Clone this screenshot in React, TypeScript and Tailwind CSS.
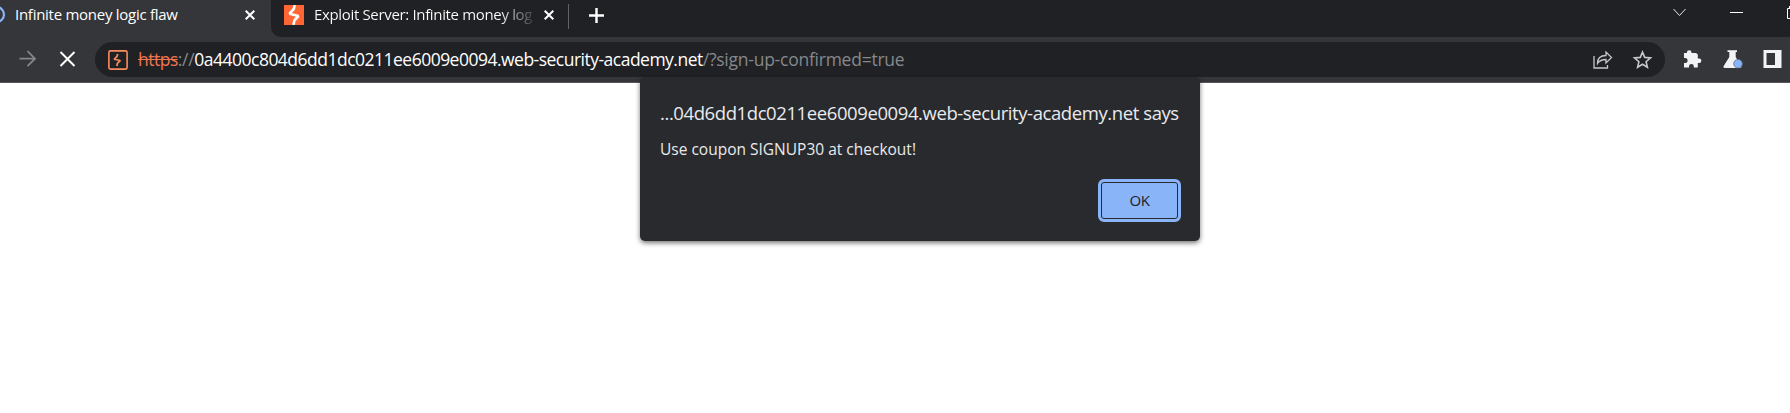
import React from "react";

const bolt = "M10.700 0L9.800 4L5.500 8.700L14.500 11L10.300 15.500L9.500 20";

function Close({ s = 10, w = 2 }: { s?: number; w?: number }) {
  return (
    <svg width={s} height={s} viewBox={`0 0 ${s} ${s}`} className="block shrink-0">
      <path d={`M0.7 0.7 L${s - 0.7} ${s - 0.7} M${s - 0.7} 0.7 L0.7 ${s - 0.7}`} stroke="#fff" strokeWidth={w} />
    </svg>
  );
}

function TabStrip() {
  return (
    <div className="flex h-[37px] bg-[#35363a]">
      <div className="flex h-[30px] w-[271px] items-center overflow-hidden">
        <svg width="15" height="20" viewBox="0 0 15 20" className="shrink-0">
          <circle cx="-3.5" cy="9.500" r="7.500" fill="none" stroke="#8ab4f8" strokeWidth="2.200" />
        </svg>
        <span className="mt-[-2px] w-[230px] whitespace-nowrap text-[15px] leading-[20px] tracking-[-0.27px] text-white">Infinite money logic flaw</span>
        <Close />
      </div>
      <div className="flex flex-1 rounded-bl-[10px] bg-[#202124]">
        <div className="flex h-[30px] flex-1 items-center pl-[13px]">
          <svg width="20" height="20" viewBox="0 0 20 20" className="shrink-0">
            <path d="M0 0H20V20H0Z" fill="#ff6633" />
            <path d={bolt} fill="none" stroke="#fff" strokeWidth="2.600" strokeLinejoin="bevel" />
          </svg>
          <span className="mt-[-2px] ml-[10px] w-[219px] whitespace-nowrap bg-linear-to-r from-white from-85% to-[#fff2] bg-clip-text text-[15px] leading-[20px] tracking-[-0.34px] text-transparent">Exploit Server: Infinite money log</span>
          <span className="ml-[11px]"><Close /></span>
          <span className="ml-[14px] mt-[2px] h-[25px] w-px bg-[#5f6368]" />
          <svg width="15" height="15" viewBox="0 0 15 15" className="ml-[20px]">
            <path d="M7.5 0V15M0 7.5H15" stroke="#fff" strokeWidth="2.4" />
          </svg>
        </div>
        <svg width="117" height="30" viewBox="0 0 117 30" className="shrink-0">
          <path d="M0.5 9L6.5 15.5L12.5 9" fill="none" stroke="#e8e8e8" strokeWidth="1" />
          <path d="M57 12.5H70" stroke="#fff" strokeWidth="1" />
          <path d="M117 8.5H114.5V18.5H117M116.5 8V6" fill="none" stroke="#fff" strokeWidth="1" />
        </svg>
      </div>
    </div>
  );
}

function Toolbar() {
  return (
    <div className="flex h-[46px] items-start border-b border-[#56575b] bg-[#35363a] pt-[5px]">
      <svg width="95" height="35" viewBox="0 0 95 35" className="shrink-0">
        <path d="M19.500 16.700H35M27.500 9.200L35 16.700L27.500 24.200" fill="none" stroke="#85868a" strokeWidth="1.800" />
        <path d="M60.500 10L74.500 24M74.500 10L60.500 24" stroke="#fff" strokeWidth="2" />
      </svg>
      <div className="flex h-[35px] w-[1570px] shrink-0 items-center rounded-full bg-[#202124] pl-[13px]">
        <svg width="20" height="20" viewBox="0 0 20 20" className="shrink-0">
          <rect x="0.900" y="0.900" width="18.200" height="18.200" rx="1.500" fill="none" stroke="#f98c5d" strokeWidth="1.600" />
          <path d={bolt} fill="none" stroke="#f98c5d" strokeWidth="2.600" strokeLinejoin="bevel" transform="translate(2.400 4) scale(.68 .6)" />
        </svg>
        <div className="mt-[-2px] ml-[10px] flex-1 whitespace-nowrap text-[17.5px] leading-[24px] tracking-[-0.24px] text-[#85888c]">
          <span className="tracking-[-0.500px] text-[#f0744e] line-through">https</span><span className="tracking-[-0.300px]">://</span><span className="tracking-[-0.510px] text-white">0a4400c804d6dd1dc0211ee6009e0094.web-security-academy.net</span>/?sign-up-confirmed=true
        </div>
        <svg width="72" height="35" viewBox="0 0 72 35" className="shrink-0" fill="none" stroke="#c5c7ca">
          <path d="M1 14V26H14.500V23" strokeWidth="1.300" />
          <path d="M4.500 21.500C4.500 16 7.500 13.500 13 13.500V10L18.500 15.500L13 21V17.500C9 17.500 6.500 18.500 4.500 21.500Z" strokeWidth="1.300" />
          <path d="M49.500 10L51.700 15.400L57.500 15.900L53.100 19.700L54.400 25.300L49.500 22.300L44.600 25.300L45.900 19.700L41.500 15.900L47.300 15.400Z" strokeWidth="1.600" />
        </svg>
      </div>
      <svg width="125" height="35" viewBox="0 0 125 35" className="shrink-0">
        <path transform="translate(10 0)" d="M20.500 11H16.500V10.500a2.300 2.300 0 0 0-4.600 0V11H9v5h1.100a2.500 2.500 0 0 1 0 5H9v4.500h5V24.300a2.400 2.400 0 0 1 4.800 0v1.200h4V21h1.300a2.300 2.300 0 0 0 0-4.600h-1.300V12.500Q22 11 20.500 11Z" fill="#f1f3f4" />
        <path d="M62.500 8.200H72V10H70.700V15L76 23.500Q77 26 75 26H60Q57.500 26 59 23.500L64.300 15V10H62.500Z" fill="#f1f3f4" />
        <circle cx="73" cy="21.700" r="4.300" fill="#8ab4f8" stroke="#5c7096" strokeWidth="0.800" />
        <path d="M98.500 8H116.500V26H98.500ZM101.500 11V23H110V11Z" fill="#f1f3f4" fillRule="evenodd" />
      </svg>
    </div>
  );
}

function Dialog() {
  return (
    <div className="absolute left-[640px] top-[77px] flex h-[164px] w-[560px] flex-col rounded-[5px] bg-[#292a2d] px-[20px] pt-[23px] text-[#e8eaed] shadow-[0_2px_5px_rgba(0,0,0,0.55)]">
      <div className="whitespace-nowrap text-[18.5px] leading-[26px] tracking-[-0.41px]">...04d6dd1dc0211ee6009e0094.web-security-academy.net says</div>
      <div className="mt-[13px] whitespace-nowrap text-[15.5px] leading-[20px] tracking-[0px]">Use coupon SIGNUP30 at checkout!</div>
      <button className="mr-[-1px] mt-[20px] flex h-[43px] w-[83px] items-center justify-center self-end rounded-[6px] border-[3px] border-[#8ab4f8] bg-[#8ab4f8] text-[15px] tracking-[-0.5px] text-[#202124] shadow-[inset_0_0_0_1px_#292a2d]">OK</button>
    </div>
  );
}

export default function App() {
  return (
    <div className="relative h-[413px] w-[1790px] overflow-hidden bg-white font-['Open_Sans','Noto_Sans',sans-serif]">
      <TabStrip />
      <Toolbar />
      <Dialog />
    </div>
  );
}
